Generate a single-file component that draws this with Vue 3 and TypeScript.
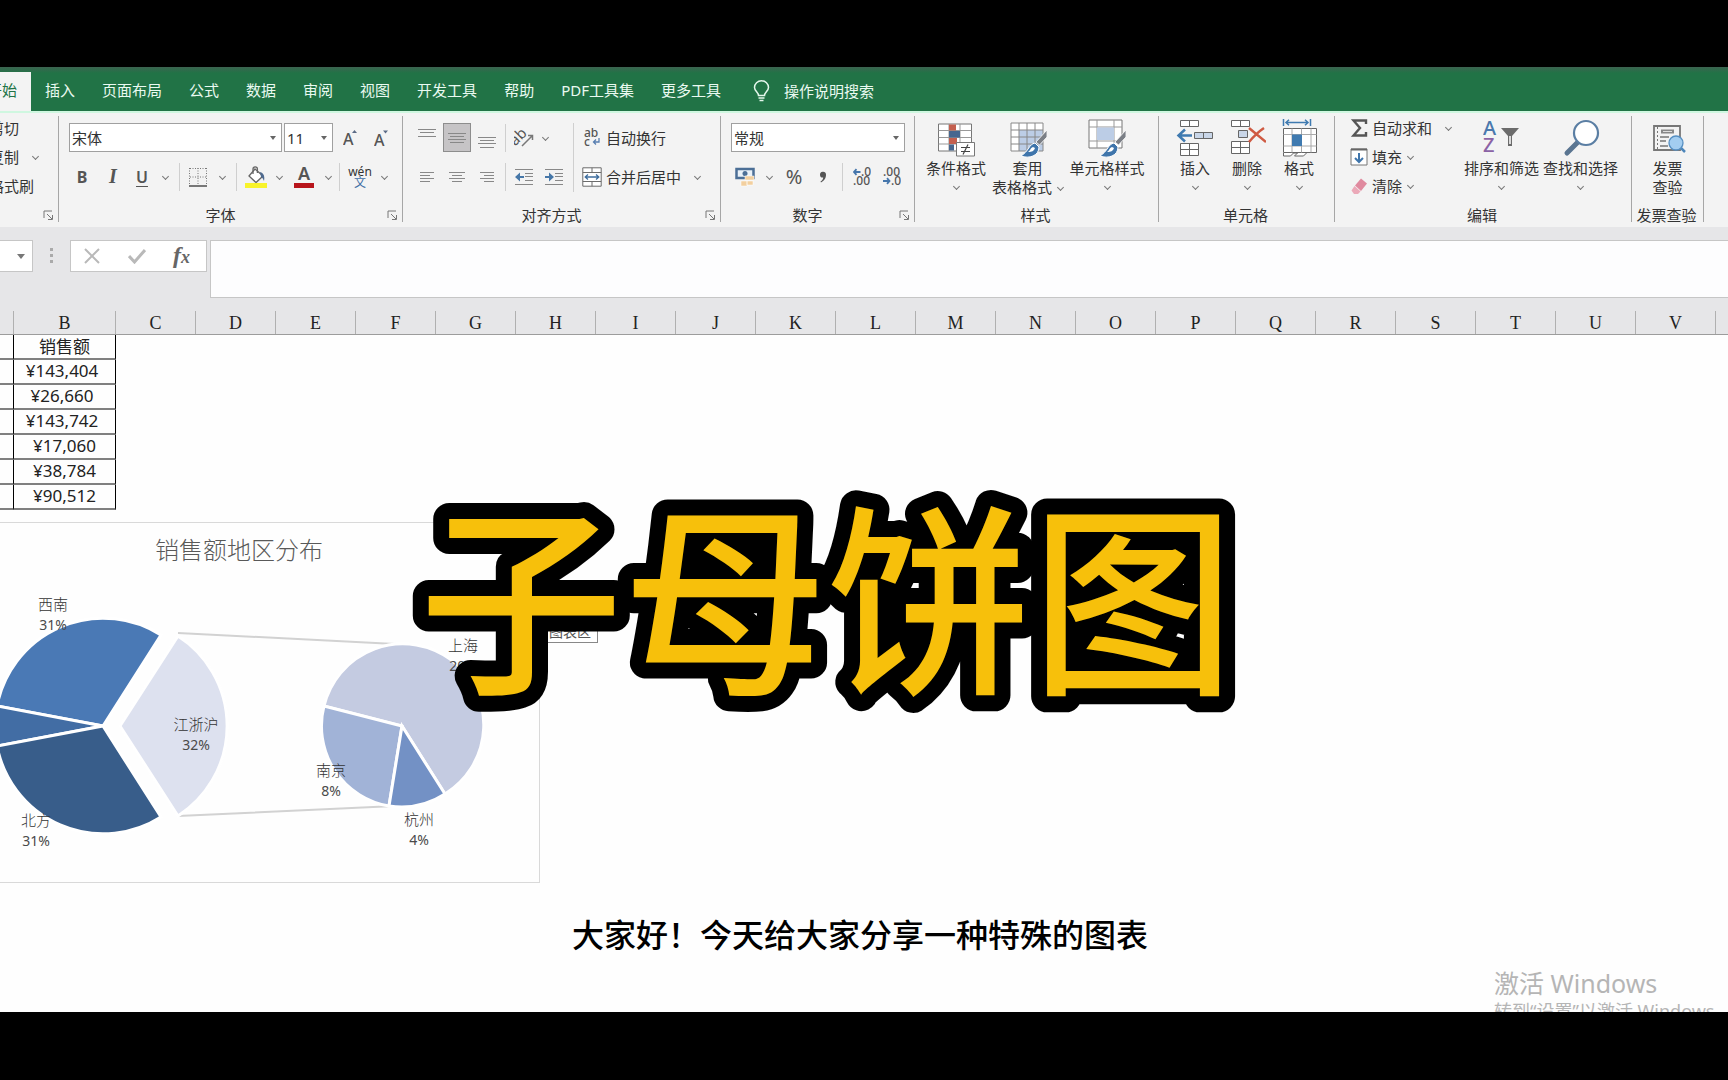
<script setup lang="ts">
import { ref } from 'vue'

interface SalesRow {
  amount: string
  padded: boolean
}

interface Slice {
  d: string
  fill: string
}

interface SliceLabel {
  name: string
  share: string
  x: number
  y: number
}

const tabs: string[] = ['开始', '插入', '页面布局', '公式', '数据', '审阅', '视图', '开发工具', '帮助', 'PDF工具集', '更多工具']
const activeTab = ref('开始')
const fontName = ref('宋体')
const fontSize = ref('11')
const numberFormat = ref('常规')
const formula = ref('')

const columns: string[] = ['', ...'BCDEFGHIJKLMNOPQRSTUVW'.split('')]

const rows: SalesRow[] = [
  { amount: '¥143,404', padded: true },
  { amount: '¥26,660', padded: true },
  { amount: '¥143,742', padded: true },
  { amount: '¥17,060', padded: false },
  { amount: '¥38,784', padded: false },
  { amount: '¥90,512', padded: false },
]

const slices: Slice[] = [
  { d: 'M103 204 L-3 184 A108 108 0 0 1 161 113 Z', fill: '#4a79b5' },
  { d: 'M103 204 L-3 224 A108 108 0 0 1 -3 184 Z', fill: '#426da4' },
  { d: 'M103 204 L161 295 A108 108 0 0 1 -3 224 Z', fill: '#385d8a' },
  { d: 'M120 204 L178 114 A107 107 0 0 1 178 294 Z', fill: '#dde1ef' },
  { d: 'M402 204 L324 184 A81 81 0 1 1 445 272 Z', fill: '#c4cbe1' },
  { d: 'M402 204 L389 284 A81 81 0 0 1 324 184 Z', fill: '#a1b3d7' },
  { d: 'M402 204 L445 272 A81 81 0 0 1 389 284 Z', fill: '#7391c5' },
]

const labels: SliceLabel[] = [
  { name: '西南', share: '31%', x: 53, y: 88 },
  { name: '北方', share: '31%', x: 36, y: 304 },
  { name: '江浙沪', share: '32%', x: 196, y: 208 },
  { name: '上海', share: '20%', x: 463, y: 129 },
  { name: '南京', share: '8%', x: 331, y: 254 },
  { name: '杭州', share: '4%', x: 419, y: 303 },
]
</script>

<template>
  <div class="frame">
    <main class="app">
      <nav class="tabs" aria-label="功能区">
        <button v-for="t in tabs" :key="t" class="tab" :class="{ active: t === activeTab }" @click="activeTab = t">{{ t }}</button>
        <button class="tell">
          <svg width="17" height="22" viewBox="0 0 17 22" fill="none" stroke="#e4f7ec" stroke-width="1.5">
            <path d="M5.5 15.500C5.500 12.500 1.500 11 1.500 7.500a7 6.700 0 0 1 14 0C15.500 11 11.500 12.500 11.500 15.500ZM5.500 18h6M6.500 20.500h4" />
          </svg>
          操作说明搜索
        </button>
      </nav>

      <section class="ribbon">
        <div class="group clip">
          <div class="body stack">
            <button class="line">剪切</button>
            <button class="line">复制<i class="chev far"></i></button>
            <button class="line">格式刷</button>
          </div>
          <div class="caption-row"><button class="launch" aria-label="剪贴板设置"><svg width="11" height="11" viewBox="0 0 11 11"><path d="M1 8V1h8M4 4l5 5M9.500 5v4.500H5" /></svg></button></div>
        </div>

        <div class="group font">
          <div class="body rows">
            <div class="row combos">
              <span class="combo wide"><select v-model="fontName" aria-label="字体"><option>宋体</option></select></span>
              <span class="combo small"><select v-model="fontSize" aria-label="字号"><option>11</option></select></span>
              <button class="ic w32" aria-label="增大字号"><svg width="16" height="18" viewBox="0 0 16 18"><text x="0" y="16" class="g16">A</text><path d="M9 4l2.500-3 2.500 3z" fill="#5b6b86" /></svg></button>
              <button class="ic w26" aria-label="减小字号"><svg width="16" height="18" viewBox="0 0 16 18"><text x="0" y="17" class="g16">A</text><path d="M9 1.500h5l-2.500 3z" fill="#5b6b86" /></svg></button>
            </div>
            <div class="row">
              <button class="ic w30 bold">B</button>
              <button class="ic w32 italic">I</button>
              <button class="ic w26 under">U</button>
              <button class="ic w20" aria-label="下划线选项"><i class="chev"></i></button>
              <i class="sep"></i>
              <button class="ic w28" aria-label="边框"><svg width="18" height="20" viewBox="0 0 18 20" fill="none" stroke="#777"><path d="M.5 1v18M17.500 1v18M9 1v18M1 1.500h16M1 10h16" stroke-dasharray="1 1.500" /><path d="M0 19h18" stroke-width="2" /></svg></button>
              <button class="ic w20" aria-label="边框选项"><i class="chev"></i></button>
              <i class="sep"></i>
              <button class="ic w30" aria-label="填充颜色"><svg width="24" height="24" viewBox="0 0 24 24"><path d="M11 4l8 7-7 6.500-7-6.500z" fill="#fff" stroke="#666" stroke-width="1.300" /><path d="M9 9V4a2.200 2.200 0 0 1 4.400 0v4" fill="none" stroke="#666" stroke-width="1.300" /><path d="M16 7c4 1 5 5 4 9-1-2-1-3-3-4z" fill="#4e6a8f" /><path d="M1 18h22v5H1z" fill="#f8f32b" /></svg></button>
              <button class="ic w16" aria-label="填充选项"><i class="chev"></i></button>
              <button class="ic w34" aria-label="字体颜色"><svg width="20" height="24" viewBox="0 0 20 24"><text x="4" y="15" class="g18">A</text><path d="M0 18h20v5H0z" fill="#b8151b" /></svg></button>
              <button class="ic w14" aria-label="字体颜色选项"><i class="chev"></i></button>
              <i class="sep"></i>
              <button class="ic w32 pinyin"><span>wén</span><b>文</b></button>
              <button class="ic w16" aria-label="拼音选项"><i class="chev"></i></button>
            </div>
          </div>
          <div class="caption-row"><span>字体</span><button class="launch" aria-label="字体设置"><svg width="11" height="11" viewBox="0 0 11 11"><path d="M1 8V1h8M4 4l5 5M9.500 5v4.500H5" /></svg></button></div>
        </div>

        <div class="group align">
          <div class="body cols">
            <div class="rows">
              <div class="row">
                <button class="ic w32" aria-label="顶端对齐"><svg class="ln" width="18" height="20" viewBox="0 0 18 20"><path d="M0 1.500h18M2 4.500h14M0 8.500h18" /></svg></button>
                <button class="ic w28 on" aria-label="垂直居中"><svg class="ln" width="18" height="20" viewBox="0 0 18 20"><path d="M0 5.500h18M2 8.500h14M0 11.500h18M2 14.500h14" /></svg></button>
                <button class="ic w32" aria-label="底端对齐"><svg class="ln" width="18" height="20" viewBox="0 0 18 20"><path d="M0 9.500h18M2 12.500h14M0 15.500h18M2 19.500h14" /></svg></button>
                <i class="sep tight"></i>
                <button class="ic w32" aria-label="方向"><svg width="20" height="20" viewBox="0 0 20 20"><text x="-3" y="12" class="g15" transform="rotate(-45 7 10)">ab</text><path d="M8 18L18 8M18.500 12V7.500H14" fill="none" stroke="#777" stroke-width="1.500" /></svg></button>
                <button class="ic w10" aria-label="方向选项"><i class="chev"></i></button>
              </div>
              <div class="row">
                <button class="ic w32" aria-label="左对齐"><svg class="ln" width="14" height="12" viewBox="0 0 14 12"><path d="M0 1.500h14M0 4.500h10M0 7.500h14M0 10.500h10" /></svg></button>
                <button class="ic w28" aria-label="居中"><svg class="ln" width="16" height="12" viewBox="0 0 16 12"><path d="M0 1.500h16M3 4.500h10M0 7.500h16M3 10.500h10" /></svg></button>
                <button class="ic w32" aria-label="右对齐"><svg class="ln" width="14" height="12" viewBox="0 0 14 12"><path d="M0 1.500h14M4 4.500h10M0 7.500h14M4 10.500h10" /></svg></button>
                <i class="sep tight"></i>
                <button class="ic w32" aria-label="减少缩进"><svg class="ln" width="18" height="18" viewBox="0 0 18 18"><path d="M0 1.500h18M10 5.500h8M10 8.500h8M10 12.500h8M0 16.500h18" /><path d="M0 9l5-4.500V8h4v2H5v3.500z" class="blue" /></svg></button>
                <button class="ic w28" aria-label="增加缩进"><svg class="ln" width="18" height="18" viewBox="0 0 18 18"><path d="M0 1.500h18M10 5.500h8M10 8.500h8M10 12.500h8M0 16.500h18" /><path d="M9 9L4 4.500V8H0v2h4v3.500z" class="blue" /></svg></button>
              </div>
            </div>
            <i class="sep tall"></i>
            <div class="rows wrap">
              <div class="row">
                <button class="line"><svg width="20" height="20" viewBox="0 0 20 20"><text x="2" y="9" class="g12">ab</text><text x="2" y="18" class="g12">c</text><path d="M17 10v4h-5M14 11.500L11.500 14l2.500 2.500" fill="none" stroke="#587eb0" stroke-width="1.300" /></svg>自动换行</button>
              </div>
              <div class="row">
                <button class="line"><svg width="20" height="20" viewBox="0 0 20 20" fill="#fff" stroke="#6c6c6c"><path d="M.8.8h18.400v18.400H.8zM.8 5.500h18.400M.8 14.500h18.400M10 .8v4.700M10 14.500v4.700" /><path d="M3 10h14M6 7.500L3.200 10 6 12.500M14 7.500l2.800 2.500-2.800 2.500" fill="none" stroke="#3f6e9e" stroke-width="1.300" /></svg>合并后居中<i class="chev far"></i></button>
              </div>
            </div>
          </div>
          <div class="caption-row"><span>对齐方式</span><button class="launch" aria-label="对齐设置"><svg width="11" height="11" viewBox="0 0 11 11"><path d="M1 8V1h8M4 4l5 5M9.500 5v4.500H5" /></svg></button></div>
        </div>

        <div class="group number">
          <div class="body rows">
            <div class="row combos"><span class="combo mid"><select v-model="numberFormat" aria-label="数字格式"><option>常规</option></select></span></div>
            <div class="row">
              <button class="ic w32" aria-label="会计格式"><svg width="20" height="20" viewBox="0 0 20 20"><path d="M1.500 2h17v9h-17z" fill="#e9f1f8" stroke="#4c6f96" stroke-width="2.500" /><circle cx="10" cy="6.500" r="2.500" fill="#4c6f96" /><path d="M10 9h9v4h-9zM6 14h6v5H6zM12 14h6v4h-6z" fill="#f2cf9f" stroke="#fff" stroke-width=".5" /></svg></button>
              <button class="ic w16" aria-label="会计格式选项"><i class="chev"></i></button>
              <button class="ic w34 pct">%</button>
              <button class="ic w24" aria-label="千位分隔"><svg width="8" height="12" viewBox="0 0 8 12"><path d="M1 4a3 3 0 0 1 6-.5C7.200 7 5 10 2 11.500L1.500 10.500C3.200 9.500 4.200 8 4.200 6.500 2.500 7 1 5.800 1 4z" fill="#555" /></svg></button>
              <i class="sep push"></i>
              <button class="ic w30" aria-label="增加小数位数"><svg width="18" height="20" viewBox="0 0 18 20"><text x="8" y="9" class="g12">.0</text><text x="0" y="18" class="g12">.00</text><path d="M7.500 5H1M3.500 2.200L1 5l2.500 2.800" fill="none" stroke="#4676ac" stroke-width="1.800" /></svg></button>
              <button class="ic w30" aria-label="减少小数位数"><svg width="18" height="20" viewBox="0 0 18 20"><text x="0" y="9" class="g12">.00</text><text x="8" y="18" class="g12">.0</text><path d="M0 14h6.500M4 11.200L6.500 14 4 16.800" fill="none" stroke="#4676ac" stroke-width="1.800" /></svg></button>
            </div>
          </div>
          <div class="caption-row"><span>数字</span><button class="launch" aria-label="数字设置"><svg width="11" height="11" viewBox="0 0 11 11"><path d="M1 8V1h8M4 4l5 5M9.500 5v4.500H5" /></svg></button></div>
        </div>

        <div class="group styles">
          <div class="body cols bigs">
            <button class="big w60">
              <svg width="38" height="40" viewBox="0 0 38 40"><path d="M1.500 5h33v27h-33z" fill="#fff" stroke="#777" /><path d="M1.500 11.500h33M1.500 18.500h33M1.500 25h33M12 5v27M23 5v27" stroke="#999" fill="none" /><path d="M12 5.500h7v6h-7zM12 19h8v6h-8z" fill="#c4604f" /><path d="M12 12h11v6.500H12zM12 25.500h5v6h-5z" fill="#47678f" /><path d="M19.500 23.500h18V37h-18z" fill="#fff" stroke="#777" /><path d="M24 28.500h9M24 32.500h9M31 25.500l-5 10" stroke="#444" stroke-width="1.200" /></svg>
              <span>条件格式</span><i class="chev"></i>
            </button>
            <button class="big w83">
              <svg width="38" height="40" viewBox="0 0 38 40"><path d="M2 4h32v28H2z" fill="#fff" /><path d="M10 11h24v21H10z" fill="#bccde6" /><path d="M2 4h32v28H2zM2 11h32M2 18h32M2 25h32M10 4v28M18 4v28M26 4v28" fill="none" stroke="#888" /><path d="M38 11l-11 12 3.500 3L38 18z" fill="#7b7f86" stroke="#fff" stroke-width=".8" /><path d="M26 24c-6 1-6 8-14 13 8 3 18 0 18-9z" fill="#3f75ab" stroke="#fff" /><path d="M24 28c-3 1-2 3-5 5 4 0 6-1 7-4z" fill="#fff" /></svg>
              <span>套用</span><span class="withchev">表格格式<i class="chev"></i></span>
            </button>
            <button class="big w76">
              <svg width="38" height="40" viewBox="0 0 38 40"><path d="M1 1h33v28H1z" fill="#fff" stroke="#777" /><path d="M9 1v28M26 1v28M1 8h33M1 22h33" stroke="#999" fill="none" /><path d="M9 8.500h17V21H9z" fill="#bccde6" /><path d="M38 11l-11 12 3.500 3L38 18z" fill="#7b7f86" stroke="#fff" stroke-width=".8" /><path d="M26 24c-6 1-6 8-14 13 8 3 18 0 18-9z" fill="#3f75ab" stroke="#fff" /><path d="M24 28c-3 1-2 3-5 5 4 0 6-1 7-4z" fill="#fff" /></svg>
              <span>单元格样式</span><i class="chev"></i>
            </button>
          </div>
          <div class="caption-row plain"><span>样式</span></div>
        </div>

        <div class="group cells">
          <div class="body cols bigs">
            <button class="big w52">
              <svg width="38" height="40" viewBox="0 0 38 40" fill="#fff" stroke="#666"><path d="M4.500 1.500h18v6h-18zM13.500 1.500v6M4.500 24.500h18v12h-18zM13.500 24.500v12M4.500 30.500h18" /><path d="M18.500 13.500h18v6h-18zM27.500 13.500v6" fill="#c9d6e8" /><path d="M16 16.500H3M9 10.500l-6.500 6 6.500 6" fill="none" stroke="#3f7ab0" stroke-width="2.500" /></svg>
              <span>插入</span><i class="chev"></i>
            </button>
            <button class="big w52">
              <svg width="38" height="40" viewBox="0 0 38 40" fill="#fff" stroke="#666"><path d="M3.500 1.500h18v6h-18zM12.500 1.500v6M3.500 22.500h18v12h-18zM12.500 22.500v12M3.500 28.500h18" /><path d="M10.500 11.500h9v7h-9z" fill="#c9d6e8" /><path d="M21 9l17 14M36 9c-6 4-10 8-15 14" fill="none" stroke="#cf5a42" stroke-width="2.500" /></svg>
              <span>删除</span><i class="chev"></i>
            </button>
            <button class="big w52">
              <svg width="38" height="40" viewBox="0 0 38 40" fill="#fff" stroke="#666"><path d="M3.500 9.500h33v24h-33z" /><path d="M12 9.500v24M21.500 9.500v24M31 9.500v24M3.500 15.500h33M3.500 27h33" stroke="#aaa" /><path d="M12 15.500h10V27H12z" fill="#3f7ab0" stroke="none" /><path d="M3.500 34v3h7l3-3h4l-3 3h9l3-3" /><path d="M3.500 0v7M30.500 0v7M6 3.500h22M9 .8L6 3.500l3 2.700M25 .8l3 2.700-3 2.700" fill="none" stroke="#3f7ab0" stroke-width="1.500" /></svg>
              <span>格式</span><i class="chev"></i>
            </button>
          </div>
          <div class="caption-row plain"><span>单元格</span></div>
        </div>

        <div class="group edit">
          <div class="body cols">
            <div class="stack">
              <button class="line"><svg width="18" height="18" viewBox="0 0 18 18"><path d="M16 5V1.500H3.500L10 9l-6.500 7.500H16V13" fill="none" stroke="#555" stroke-width="2.400" /></svg>自动求和<i class="chev far"></i></button>
              <button class="line"><svg width="18" height="18" viewBox="0 0 18 18"><path d="M1 1h16v16H1z" fill="#fff" stroke="#777" /><path d="M1 1.500h16" stroke="#666" stroke-width="2" /><path d="M9 5v9M5 10l4 4 4-4" fill="none" stroke="#3f75ab" stroke-width="2" /></svg>填充<i class="chev near"></i></button>
              <button class="line"><svg width="18" height="18" viewBox="0 0 18 18"><path d="M11 1.500l6 5L11 14l-6-5.500z" fill="#e08a9f" /><path d="M4.500 9l6 5.500L8 17H4l-2.500-3.500z" fill="#eba9b8" /></svg>清除<i class="chev near"></i></button>
            </div>
            <div class="cols bigs">
              <button class="big w79">
                <svg width="38" height="40" viewBox="0 0 38 40"><text x="0" y="16" class="az" fill="#4a78ad">A</text><text x="0" y="33" class="az" fill="#8b62a5">Z</text><path d="M18 9h18l-7 8v10h-4V17z" fill="#6b6b6b" /><path d="M27 17v8" stroke="#fff" stroke-width="1.500" /></svg>
                <span>排序和筛选</span><i class="chev"></i>
              </button>
              <button class="big w79">
                <svg width="38" height="40" viewBox="0 0 38 40"><path d="M16 23L5 34" stroke="#5a7591" stroke-width="5" stroke-linecap="round" /><circle cx="24" cy="14" r="12" fill="#fff" stroke="#5a7ea3" stroke-width="2.200" /></svg>
                <span>查找和选择</span><i class="chev"></i>
              </button>
            </div>
          </div>
          <div class="caption-row plain"><span>编辑</span></div>
        </div>

        <div class="group invoice">
          <div class="body cols bigs">
            <button class="big w71">
              <svg width="38" height="40" viewBox="0 0 38 40"><path d="M5 7h26v24H5z" fill="#f3f3f3" stroke="#777" stroke-width="1.800" /><path d="M8.500 8v22" stroke="#777" stroke-dasharray="2 2" /><path d="M12 10.500h13v4H12z" fill="#888" /><path d="M14 12.500h9" stroke="#ddd" /><path d="M11 18h9M11 22h6M11 27h8" stroke="#777" stroke-width="1.300" /><path d="M31 28l5 5" stroke="#4d86ba" stroke-width="2.500" /><circle cx="27" cy="24" r="7" fill="#a3cdf0" stroke="#568fc2" stroke-width="1.300" /></svg>
              <span>发票</span><span>查验</span>
            </button>
          </div>
          <div class="caption-row plain"><span>发票查验</span></div>
        </div>
      </section>

      <section class="fbar">
        <div class="namebox"></div>
        <div class="dots"><i></i><i></i><i></i></div>
        <div class="fx">
          <button aria-label="取消"><svg width="18" height="16" viewBox="0 0 18 16"><path d="M2 1l14 14M16 1L2 15" stroke="#b9b9b9" stroke-width="2" /></svg></button>
          <button aria-label="输入"><svg width="18" height="16" viewBox="0 0 18 16"><path d="M1 8l5.500 6L17 2" fill="none" stroke="#b9b9b9" stroke-width="3" /></svg></button>
          <button class="fn">f<small>x</small></button>
        </div>
        <input v-model="formula" class="formula" aria-label="编辑栏" />
      </section>

      <div class="heads">
        <span v-for="(c, i) in columns" :key="i">{{ c }}</span>
      </div>

      <section class="sheet">
        <table class="grid">
          <thead>
            <tr><th></th><th scope="col">销售额</th></tr>
          </thead>
          <tbody>
            <tr v-for="r in rows" :key="r.amount"><td></td><td :class="{ padded: r.padded }">{{ r.amount }}</td></tr>
          </tbody>
        </table>

        <figure class="chart">
          <svg width="539" height="359" viewBox="0 1 539 359">
            <text x="239" y="37" class="ctitle">销售额地区分布</text>
            <path d="M178 111L395 122M178 294L395 284" stroke="#d2d2d2" stroke-width="2" />
            <path v-for="s in slices" :key="s.d" :d="s.d" :fill="s.fill" stroke="#fff" stroke-width="3" />
            <g v-for="l in labels" :key="l.name" class="clabel">
              <text :x="l.x" :y="l.y" class="cname">{{ l.name }}</text>
              <text :x="l.x" :y="l.y + 20">{{ l.share }}</text>
            </g>
          </svg>
        </figure>

        <div class="tip">图表区</div>

        <h1 class="title">
          <svg width="900" height="260" viewBox="0 0 900 260"><text x="450" y="204">子母饼图</text></svg>
        </h1>

        <p class="subtitle">大家好！今天给大家分享一种特殊的图表</p>

        <div class="mark"><p>激活 Windows</p><small>转到“设置”以激活 Windows。</small></div>
      </section>
    </main>
  </div>
</template>

<style>
body {
  margin: 0;
  background: #000;
}
</style>

<style scoped>
.frame {
  box-sizing: border-box;
  min-height: 100vh;
  padding: 67px 0 68px;
  background: #000;
  display: flex;
  flex-direction: column;
  overflow: hidden;
  font-family: "Noto Sans", "Noto Sans CJK SC", sans-serif;
  font-size: 15px;
  color: #333;
}
.app {
  flex: 1;
  display: flex;
  flex-direction: column;
  background: #fefefe;
}
button {
  border: 0;
  padding: 0;
  margin: 0;
  background: none;
  font: inherit;
  color: inherit;
  white-space: nowrap;
}
svg {
  flex: none;
  display: block;
}

/* tab strip */
.tabs {
  display: flex;
  height: 39px;
  padding-top: 5px;
  background: linear-gradient(#3c6450, #217346 6px);
  overflow: hidden;
}
.tab {
  flex: none;
  padding: 0 13px 4px 14px;
  color: #eafaf1;
}
.tab.active {
  background: #f3f3f3;
  color: #217346;
}
.tab:first-child {
  margin-left: -27px;
  padding-right: 14px;
}
.tell {
  display: flex;
  align-items: center;
  gap: 14px;
  margin-left: 19px;
  padding-bottom: 2px;
  color: #eafaf1;
}

/* ribbon */
.ribbon {
  display: flex;
  padding: 3px 0 5px;
  background: #f3f3f3;
  border-top: 2px solid #cff7e0;
  overflow: hidden;
}
.group {
  flex: none;
  box-sizing: border-box;
  height: 106px;
  border-right: 1px solid #a6a6a6;
  display: flex;
  flex-direction: column;
}
.clip { width: 59px; }
.font { width: 344px; }
.align { width: 318px; }
.number { width: 194px; }
.styles { width: 244px; }
.cells { width: 176px; }
.edit { width: 297px; }
.invoice { width: 72px; }
.body {
  height: 93px;
}
.caption-row {
  display: flex;
  align-items: center;
  justify-content: center;
  height: 12px;
  line-height: 12px;
  padding-right: 20px;
  position: relative;
}
.caption-row.plain {
  padding-right: 2px;
}
.launch {
  position: absolute;
  right: 4px;
  top: 1px;
}
.launch path {
  fill: none;
  stroke: #777;
}
.rows {
  display: flex;
  flex-direction: column;
  gap: 10px;
  padding: 7px 0 0 8px;
  box-sizing: border-box;
}
.cols {
  display: flex;
}
.row {
  display: flex;
  align-items: center;
  height: 29px;
}
.combos {
  gap: 2px;
  padding-left: 2px;
}
.combo {
  position: relative;
  display: block;
}
.combo::after {
  content: "";
  position: absolute;
  right: 6px;
  top: 13px;
  border: 3px solid transparent;
  border-top: 4px solid #666;
}
.combo select {
  appearance: none;
  display: block;
  box-sizing: border-box;
  width: 100%;
  height: 29px;
  padding: 0 2px;
  border: 1px solid #a0a0a0;
  border-radius: 0;
  background: #fff;
  font: inherit;
  color: #333;
}
.wide { width: 213px; }
.small { width: 49px; }
.mid { width: 174px; }
.ic {
  flex: none;
  height: 29px;
  display: flex;
  align-items: center;
  justify-content: center;
}
.w10 { width: 10px; }
.w14 { width: 14px; }
.w16 { width: 16px; }
.w20 { width: 20px; }
.w24 { width: 24px; }
.w26 { width: 26px; }
.w28 { width: 28px; }
.w30 { width: 30px; }
.w32 { width: 32px; }
.w34 { width: 34px; }
.w52 { width: 52px; }
.w60 { width: 60px; }
.w71 { width: 71px; }
.w76 { width: 76px; }
.w79 { width: 79px; }
.w83 { width: 83px; }
.on {
  background: #c6c4c6;
  outline: 1px solid #8d8d8d;
  outline-offset: -1px;
}
.bold {
  font-size: 16px;
  font-weight: 700;
  color: #555;
}
.italic {
  font-family: "Liberation Serif", serif;
  font-size: 20px;
  font-weight: 700;
  font-style: italic;
  color: #555;
}
.under {
  font-size: 16px;
  font-weight: 600;
  color: #555;
  text-decoration: underline;
  text-underline-offset: 3px;
}
.pinyin {
  flex-direction: column;
  font-size: 12px;
  line-height: 11px;
}
.pinyin b {
  font-weight: 400;
  color: #3f6ea5;
}
.pct {
  font-size: 20px;
  color: #555;
}
.chev {
  flex: none;
  display: block;
  box-sizing: border-box;
  width: 5px;
  height: 5px;
  border: solid #777;
  border-width: 0 1px 1px 0;
  transform: rotate(45deg);
}
.chev.far {
  margin-left: 10px;
}
.chev.near {
  margin-left: 2px;
}
.sep {
  flex: none;
  width: 1px;
  height: 28px;
  margin: 0 4px;
  background: #cfcfcf;
}
.sep.tight {
  margin: 0 2px;
}
.sep.push {
  margin-left: 7px;
}
.sep.tall {
  height: 69px;
  margin: 7px 0 0 2px;
}
.align .rows:first-child {
  width: 168px;
}
.wrap {
  padding-left: 8px;
}
.line {
  display: flex;
  align-items: center;
  gap: 4px;
}
.stack {
  display: flex;
  flex-direction: column;
}
.stack .line {
  height: 29px;
}
.body.stack,
.cols > .stack {
  margin-top: -3px;
}
.body.stack {
  height: 96px;
}
.clip .stack {
  margin-left: -11px;
}
.edit .stack {
  width: 112px;
  padding-left: 15px;
}
.bigs {
  padding-top: 3px;
  box-sizing: border-box;
}
.styles .bigs { padding-left: 11px; }
.cells .bigs { padding-left: 10px; }
.big {
  flex: none;
  display: flex;
  flex-direction: column;
  align-items: center;
  align-self: flex-start;
}
.big > span {
  line-height: 19px;
}
.big > .chev {
  margin-top: 6px;
}
.withchev {
  display: flex;
  align-items: center;
  gap: 6px;
}
.ln path {
  fill: none;
  stroke: #888;
}
.ln path.blue {
  fill: #4677a8;
  stroke: none;
}
.g12 { font-size: 12px; font-weight: 500; fill: #555; }
.g15 { font-size: 15px; fill: #555; }
.g16 { font-size: 16px; font-weight: 500; fill: #555; }
.g18 { font-size: 18px; font-weight: 600; fill: #555; }
.az { font-size: 20px; font-weight: 500; }

/* formula bar */
.fbar {
  display: flex;
  align-items: flex-start;
  padding: 13px 0;
  background: #e6e6e8;
}
.namebox {
  position: relative;
  box-sizing: border-box;
  width: 33px;
  height: 32px;
  background: #fff;
  border: 1px solid #c6c6c6;
  border-left: 0;
}
.namebox::after {
  content: "";
  position: absolute;
  right: 7px;
  top: 13px;
  border: 4px solid transparent;
  border-top: 5px solid #777;
}
.dots {
  display: flex;
  flex-direction: column;
  align-items: center;
  gap: 3px;
  width: 37px;
  padding-top: 8px;
}
.dots i {
  width: 3px;
  height: 3px;
  background: #aaa;
}
.fx {
  box-sizing: border-box;
  display: flex;
  align-items: center;
  justify-content: space-between;
  width: 137px;
  height: 32px;
  padding: 0 16px 0 12px;
  background: #fff;
  border: 1px solid #c6c6c6;
}
.fn {
  font-family: "Liberation Serif", serif;
  font-size: 24px;
  line-height: 24px;
  font-style: italic;
  font-weight: 700;
  color: #666;
}
.fn small {
  font-size: 18px;
}
.formula {
  flex: 1;
  box-sizing: border-box;
  height: 58px;
  min-width: 0;
  margin: 0 0 0 3px;
  padding: 0 8px;
  border: 1px solid #c6c6c6;
  border-right: 0;
  background: #fdfdfe;
  font: inherit;
}

/* column letters */
.heads {
  display: flex;
  height: 23px;
  background: #e6e6e8;
  border-bottom: 1px solid #9c9c9c;
  overflow: hidden;
  font-family: "Liberation Serif", serif;
  font-size: 18px;
  line-height: 25px;
  text-align: center;
  color: #222;
}
.heads span {
  flex: none;
  box-sizing: border-box;
  width: 80px;
  border-right: 1px solid #b0b0b0;
}
.heads span:first-child { width: 14px; }
.heads span:nth-child(2) { width: 102px; }

/* sheet */
.sheet {
  position: relative;
  flex: 1;
  overflow: hidden;
}
.grid {
  border-spacing: 0;
  table-layout: fixed;
  width: 116px;
  font-size: 17px;
  line-height: 20px;
  color: #222;
}
.grid th,
.grid td {
  box-sizing: border-box;
  height: 25px;
  padding: 0 0 2px;
  border-bottom: 2px solid #808080;
  border-right: 1px solid #000;
  text-align: center;
  font-weight: 400;
}
.grid th {
  padding: 0;
}
.grid th:first-child {
  width: 14px;
}
.grid td.padded {
  padding-right: 5px;
}
.chart {
  box-sizing: border-box;
  width: 540px;
  margin: 12px 0 0;
  border: 1px solid #d9d9d9;
  border-left: 0;
}
.ctitle {
  font-size: 24px;
  font-weight: 300;
  fill: #595959;
  text-anchor: middle;
}
.clabel {
  font-size: 14px;
  fill: #4a4a4a;
  text-anchor: middle;
}
.cname {
  font-size: 15px;
  font-weight: 300;
  fill: #333;
}
.tip {
  position: absolute;
  left: 541px;
  top: 286px;
  padding: 0 6px 0 7px;
  border: 1px solid #888;
  background: #fff;
  font-size: 14px;
  line-height: 20px;
  color: #555;
}
.title {
  position: absolute;
  left: 0;
  right: 74px;
  top: 140px;
  margin: 0;
  display: flex;
  justify-content: center;
}
.title text {
  font-family: "Noto Sans CJK SC", sans-serif;
  font-size: 204px;
  font-weight: 500;
  text-anchor: middle;
  fill: #f7c00b;
  stroke: #000;
  stroke-width: 32px;
  stroke-linejoin: round;
  paint-order: stroke;
}
.subtitle {
  position: absolute;
  left: 0;
  right: 8px;
  top: 575px;
  margin: 0;
  font-family: "Noto Sans CJK SC", sans-serif;
  font-size: 32px;
  line-height: 46px;
  font-weight: 500;
  text-align: center;
  color: #000;
}
.mark {
  position: absolute;
  right: 0;
  top: 633px;
  width: 234px;
  color: #b5b5b5;
  white-space: nowrap;
}
.mark p {
  margin: 0;
  font-size: 25px;
  line-height: 30px;
}
.mark small {
  display: block;
  font-size: 18px;
  line-height: 26px;
}
</style>
